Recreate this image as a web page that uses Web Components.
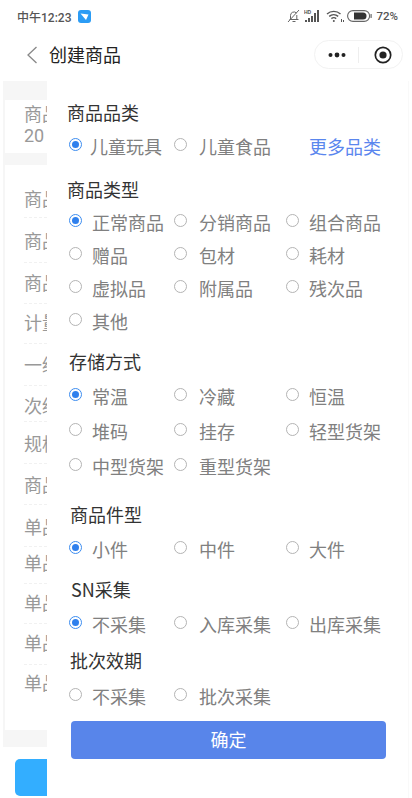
<!DOCTYPE html>
<html lang="zh">
<head>
<meta charset="utf-8">
<title>创建商品</title>
<style>
    html, body { margin: 0; padding: 0; background: #fff; }
    body { width: 412px; height: 798px; overflow: hidden; font-family: "Noto Sans CJK SC", "Liberation Sans", sans-serif; }
</style>
</head>
<body>
<app-screen>
    <status-bar></status-bar>
    <nav-bar>创建商品</nav-bar>
    <form-page></form-page>
    <sheet-panel>
        <option-group label="商品品类" top="20" pitch="33" gap="10" style="--title-x:-1px">
            <radio-option checked style="--label-x:22px">儿童玩具</radio-option>
            <radio-option>儿童食品</radio-option>
            <more-link>更多品类</more-link>
        </option-group>
        <option-group label="商品类型" top="10" pitch="33" gap="9" style="--title-x:-1px">
            <radio-option checked>正常商品</radio-option>
            <radio-option>分销商品</radio-option>
            <radio-option>组合商品</radio-option>
            <radio-option>赠品</radio-option>
            <radio-option>包材</radio-option>
            <radio-option>耗材</radio-option>
            <radio-option>虚拟品</radio-option>
            <radio-option>附属品</radio-option>
            <radio-option>残次品</radio-option>
            <radio-option>其他</radio-option>
        </option-group>
        <option-group label="存储方式" top="7" pitch="35" gap="11" style="--title-x:1px">
            <radio-option checked>常温</radio-option>
            <radio-option>冷藏</radio-option>
            <radio-option>恒温</radio-option>
            <radio-option>堆码</radio-option>
            <radio-option>挂存</radio-option>
            <radio-option>轻型货架</radio-option>
            <radio-option>中型货架</radio-option>
            <radio-option>重型货架</radio-option>
        </option-group>
        <option-group label="商品件型" top="13" pitch="35" gap="11" style="--title-x:2px">
            <radio-option checked>小件</radio-option>
            <radio-option>中件</radio-option>
            <radio-option>大件</radio-option>
        </option-group>
        <option-group label="SN采集" top="5" pitch="35" gap="11" style="--title-x:3px">
            <radio-option checked>不采集</radio-option>
            <radio-option>入库采集</radio-option>
            <radio-option>出库采集</radio-option>
        </option-group>
        <option-group label="批次效期" top="1" pitch="35" gap="12" style="--title-x:2px">
            <radio-option>不采集</radio-option>
            <radio-option>批次采集</radio-option>
        </option-group>
        <confirm-button>确定</confirm-button>
    </sheet-panel>
</app-screen>

<script>
class AppScreen extends HTMLElement {
    constructor() {
        super();
        this.attachShadow({mode: "open"}).innerHTML = `
            <style>
                :host {
                    display: flex;
                    flex-direction: column;
                    position: relative;
                    width: 412px;
                    height: 798px;
                    overflow: hidden;
                    background: #fff;
                }
            </style>
            <slot></slot>`;
    }
}

class StatusBar extends HTMLElement {
    constructor() {
        super();
        this.attachShadow({mode: "open"}).innerHTML = `
            <style>
                :host {
                    display: flex;
                    align-items: center;
                    height: 32px;
                    padding: 0 14px 0 17px;
                    font-family: Roboto, "Noto Sans CJK SC", sans-serif;
                    font-size: 12px;
                    font-weight: 500;
                    color: #555;
                    box-sizing: border-box;
                }
                .time { margin-right: 7px; }
                .right {
                    margin-left: auto;
                    display: flex;
                    align-items: center;
                }
                .level { font-size: 11.5px; }
                svg { display: block; }
            </style>
            <span class="time">中午12:23</span>
            <svg width="13" height="13" viewBox="0 0 13 13">
                <rect width="13" height="13" rx="3" fill="#2b9cf5"/>
                <path d="M2.5 3.5 10.5 4.5 8 10z" fill="#fff"/>
            </svg>
            <div class="right">
                <svg width="13" height="14" viewBox="0 0 13 14" style="margin-right:4px" fill="none" stroke="#666" stroke-width="1">
                    <path d="M2.5 10.5h9M3.5 10.5V6.5a3.5 3.5 0 0 1 6 -2.5M9.8 6v4.5M5.5 12.5h3M1 13 12 1"/>
                </svg>
                <svg width="16" height="14" viewBox="0 0 16 14" style="margin-right:6px" fill="#555">
                    <text x="0" y="4.5" font-size="5" font-family="Liberation Sans" font-weight="700">HD</text>
                    <rect x="1" y="11" width="2" height="2"/>
                    <rect x="4" y="9" width="2" height="4"/>
                    <rect x="7" y="7" width="2" height="6"/>
                    <rect x="10" y="4" width="2" height="9"/>
                    <rect x="13" y="1" width="2" height="12"/>
                </svg>
                <svg width="18" height="14" viewBox="0 0 18 14" style="margin-right:3px" fill="none" stroke="#555" stroke-width="1.4">
                    <path d="M1 5a10 10 0 0 1 13.5 0M3.2 7.4a7 7 0 0 1 9 0M5.4 9.6a3.8 3.8 0 0 1 4.8 0"/>
                    <circle cx="7.8" cy="12" r="1" fill="#555" stroke="none"/>
                    <path d="M15.5 10v3M17.5 11v2" stroke-width="1"/>
                </svg>
                <svg width="25" height="12" viewBox="0 0 25 12" style="margin-right:4px">
                    <rect x=".6" y=".6" width="22" height="10.8" rx="5.4" fill="none" stroke="#666" stroke-width="1.1"/>
                    <path d="M7 2.5h9a3.5 3.5 0 0 1 0 7H7z" fill="#333"/>
                    <rect x="23.5" y="4" width="1.2" height="4" rx=".6" fill="#666"/>
                </svg>
                <span class="level">72%</span>
            </div>`;
    }
}

class NavBar extends HTMLElement {
    constructor() {
        super();
        this.attachShadow({mode: "open"}).innerHTML = `
            <style>
                :host {
                    display: flex;
                    align-items: center;
                    height: 45px;
                    margin-bottom: 4px;
                    padding: 0 9px 0 26px;
                    box-sizing: border-box;
                    font-size: 18px;
                    color: #222;
                }
                .back { margin-right: 11px; display: block; }
                .title { line-height: 24px; margin-bottom: 2px; }
                .capsule {
                    margin-left: auto;
                    width: 89px;
                    height: 29px;
                    box-sizing: border-box;
                    border: 1px solid #f2f2f2;
                    border-radius: 15px;
                    display: grid;
                    grid-template-columns: 43px 1px 1fr;
                    align-items: center;
                    justify-items: center;
                }
                .line { width: 1px; height: 16px; background: #eee; }
                .target { margin-left: 4px; }
                svg { display: block; }
            </style>
            <svg class="back" width="12" height="18" viewBox="0 0 12 18" fill="none" stroke="#888" stroke-width="1.3">
                <path d="M10.5 1 2 9l8.5 8"/>
            </svg>
            <span class="title"><slot></slot></span>
            <div class="capsule">
                <svg width="18" height="6" viewBox="0 0 18 6" fill="#222">
                    <circle cx="2.5" cy="3" r="2"/><circle cx="9" cy="3" r="2.4"/><circle cx="15.5" cy="3" r="2"/>
                </svg>
                <span class="line"></span>
                <svg class="target" width="18" height="18" viewBox="0 0 18 18">
                    <circle cx="9" cy="9" r="7.7" fill="none" stroke="#222" stroke-width="1.7"/>
                    <circle cx="9" cy="9" r="3.6" fill="#222"/>
                </svg>
            </div>`;
    }
}

// the page behind the sheet, only its left edge is visible
class FormPage extends HTMLElement {
    constructor() {
        super();
        // label, row height, distance from row top to the text's middle
        const rows = [
            ["商品", 41, 21], ["商品", 45, 22], ["商品", 41, 19], ["计量", 40, 18], ["一级", 42, 20],
            ["次级", 36, 19], ["规格", 42, 21], ["商品", 41, 20], ["单品", 42, 21], ["单品", 37, 15],
            ["单品", 40, 18], ["单品", 41, 18], ["单品", 40, 17]
        ];
        this.attachShadow({mode: "open"}).innerHTML = `
            <style>
                :host {
                    display: block;
                    margin-left: 3px;
                    width: 405px;
                    height: 717px;
                    box-sizing: border-box;
                    background: #f6f6f6;
                    padding-top: 19px;
                    font-size: 18px;
                    color: #999;
                }
                .card {
                    background: #fff;
                    margin-left: 2px;
                    padding-left: 19px;
                }
                .head {
                    height: 53px;
                    line-height: 24px;
                    padding-top: 1px;
                    box-sizing: border-box;
                    margin-bottom: 12px;
                }
                .head div { height: 23px; }
                .num { font-family: Roboto, sans-serif; }
                .list {
                    height: 565px;
                    padding-top: 12px;
                    box-sizing: border-box;
                }
                .row {
                    box-sizing: border-box;
                    border-bottom: 1px dashed #f1f1f1;
                    white-space: nowrap;
                }
                .row:last-child { border-bottom: 0; }
                .foot {
                    margin-top: 17px;
                    height: 51px;
                    background: #fff;
                    position: relative;
                }
                .submit {
                    position: absolute;
                    left: 12px;
                    top: 12px;
                    width: 60px;
                    height: 37px;
                    border-radius: 5px;
                    background: #33aeff;
                }
            </style>
            <div class="card head"><div>商品</div><div class="num">20</div></div>
            <div class="card list">
                ${rows.map(r => `<div class="row" style="height:${r[1]}px;line-height:${r[2] * 2}px">${r[0]}</div>`).join("")}
            </div>
            <div class="foot"><div class="submit"></div></div>`;
    }
}

class SheetPanel extends HTMLElement {
    constructor() {
        super();
        this.attachShadow({mode: "open"}).innerHTML = `
            <style>
                :host {
                    display: block;
                    position: absolute;
                    left: 47px;
                    top: 81px;
                    width: 361px;
                    height: 717px;
                    box-sizing: border-box;
                    padding-left: 21px;
                    background: #fff;
                    box-shadow: 1px 0 0 #f9f9f9;
                }
                .body { display: flow-root; }
            </style>
            <div class="body"><slot></slot></div>`;
    }
}

class OptionGroup extends HTMLElement {
    constructor() {
        super();
        const gap = Number(this.getAttribute("gap") || 10);
        this.attachShadow({mode: "open"}).innerHTML = `
            <style>
                :host {
                    display: block;
                    margin-top: ${this.getAttribute("top") || 0}px;
                }
                .title {
                    margin-left: var(--title-x, 0);
                    margin-top: -1px;
                    margin-bottom: ${gap + 1}px;
                    font-size: 18px;
                    line-height: 24px;
                    color: #333;
                }
                .grid {
                    display: grid;
                    grid-template-columns: 105px 112px 1fr;
                    grid-auto-rows: ${this.getAttribute("pitch") || 33}px;
                }
                ::slotted(:nth-child(3n+2)) { --label-x: 26px; }
            </style>
            <div class="title">${this.getAttribute("label")}</div>
            <div class="grid"><slot></slot></div>`;
    }
}

class RadioOption extends HTMLElement {
    constructor() {
        super();
        const on = this.hasAttribute("checked");
        this.attachShadow({mode: "open"}).innerHTML = `
            <style>
                :host {
                    display: flex;
                    font-size: 18px;
                    line-height: 24px;
                    color: #808080;
                    white-space: nowrap;
                }
                .dot {
                    box-sizing: border-box;
                    flex: none;
                    width: 13px;
                    height: 13px;
                    margin: 3px 0 0 1px;
                    border-radius: 50%;
                    border: 1px solid ${on ? "#3d8df0" : "#b4b4b4"};
                    position: relative;
                }
                .dot::after {
                    content: "";
                    display: ${on ? "block" : "none"};
                    position: absolute;
                    inset: 2px;
                    border-radius: 50%;
                    background: #2f80ed;
                }
                .text {
                    margin-left: calc(var(--label-x, 24px) - 14px);
                    margin-top: -1px;
                }
            </style>
            <span class="dot"></span>
            <span class="text"><slot></slot></span>`;
    }
}

class MoreLink extends HTMLElement {
    constructor() {
        super();
        this.attachShadow({mode: "open"}).innerHTML = `
            <style>
                :host {
                    display: block;
                    margin-top: -1px;
                    padding-left: 24px;
                    font-size: 18px;
                    line-height: 24px;
                    color: #5a86ee;
                }
            </style>
            <slot></slot>`;
    }
}

class ConfirmButton extends HTMLElement {
    constructor() {
        super();
        this.attachShadow({mode: "open"}).innerHTML = `
            <style>
                :host {
                    display: flex;
                    align-items: center;
                    justify-content: center;
                    width: 315px;
                    height: 38px;
                    padding-bottom: 2px;
                    box-sizing: border-box;
                    margin: 1px 0 0 3px;
                    border-radius: 4px;
                    background: #5885ea;
                    color: #fff;
                    font-size: 18px;
                }
            </style>
            <slot></slot>`;
    }
}

customElements.define("app-screen", AppScreen);
customElements.define("status-bar", StatusBar);
customElements.define("nav-bar", NavBar);
customElements.define("form-page", FormPage);
customElements.define("sheet-panel", SheetPanel);
customElements.define("option-group", OptionGroup);
customElements.define("radio-option", RadioOption);
customElements.define("more-link", MoreLink);
customElements.define("confirm-button", ConfirmButton);
</script>
</body>
</html>
